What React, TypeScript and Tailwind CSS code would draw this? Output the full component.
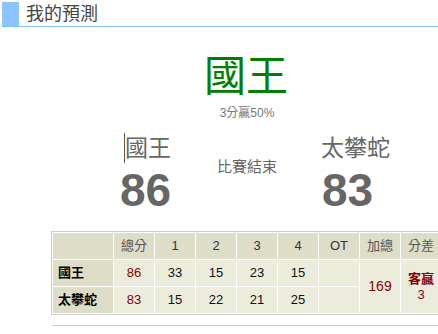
import React from "react";

const cjk = { fontFamily: '"Liberation Sans", "Noto Sans CJK TC", sans-serif' };

export default function App() {
  const head = "bg-[#dedec8] text-[#333] text-center font-normal";
  const cell = "bg-[#ececdc] text-center";
  return (
    <div className="w-[438px] h-[334px] overflow-hidden bg-white" style={cjk}>
      {/* header */}
      <div className="ml-[2px] mt-[2px] flex border-b border-[#80c0ff]">
        <div className="w-[17px] h-[24px] bg-[#8cc4ff]" />
        <div className="pl-[7px] text-[18px] leading-[24px] text-[#444]">我的預測</div>
      </div>

      {/* winner */}
      <div className="mt-[26px] text-center text-[42px] leading-[48px] text-[#008000] pl-[54px]">國王</div>
      <div className="mt-[4px] text-center text-[12px] leading-[16px] text-[#777] pl-[56px]">3分贏50%</div>

      {/* teams */}
      <div className="mt-[12px] flex">
        <div className="ml-[120px] w-[81px] flex flex-col">
          <div className="flex items-center h-[30px]">
            <span className="ml-[4px] w-px h-[30px] bg-[#555]" />
            <span className="text-[23px] leading-[30px] text-[#666]">國王</span>
          </div>
          <div className="mt-[4px] text-[46px] leading-[46px] font-bold text-[#666]" style={{ fontFamily: '"Liberation Sans", sans-serif' }}>86</div>
        </div>
        <div className="w-[92px] text-center pt-[24px] text-[15px] leading-[20px] text-[#666]">比賽結束</div>
        <div className="ml-[28px] flex flex-col">
          <div className="h-[30px] text-[23px] leading-[30px] text-[#666]">太攀蛇</div>
          <div className="mt-[4px] ml-[1px] text-[46px] leading-[46px] font-bold text-[#666]" style={{ fontFamily: '"Liberation Sans", sans-serif' }}>83</div>
        </div>
      </div>

      {/* table */}
      <div className="mt-[18px] ml-[51px] w-[400px]">
        <table className="table-fixed border-separate border-spacing-[1px] border border-[#cccccc] bg-white text-[13px] w-[392px]">
          <colgroup>
            <col className="w-[60px]" />
            <col className="w-[40px]" />
            <col className="w-[40px]" />
            <col className="w-[40px]" />
            <col className="w-[40px]" />
            <col className="w-[40px]" />
            <col className="w-[40px]" />
            <col className="w-[40px]" />
            <col className="w-[40px]" />
          </colgroup>
          <thead>
            <tr className="h-[26px]">
              <th className={head}></th>
              <th className={head + " text-[#555]"}>總分</th>
              <th className={head}>1</th>
              <th className={head}>2</th>
              <th className={head}>3</th>
              <th className={head}>4</th>
              <th className={head}>OT</th>
              <th className={head + " text-[#555]"}>加總</th>
              <th className={head + " text-[#555]"}>分差</th>
            </tr>
          </thead>
          <tbody>
            <tr className="h-[26px]">
              <td className="bg-[#dedec8] text-left pl-[5px] font-bold text-black">國王</td>
              <td className={cell + " text-[#880000]"}>86</td>
              <td className={cell + " text-[#111]"}>33</td>
              <td className={cell + " text-[#111]"}>15</td>
              <td className={cell + " text-[#111]"}>23</td>
              <td className={cell + " text-[#111]"}>15</td>
              <td className={cell}></td>
              <td rowSpan={2} className={cell + " text-[#880000] text-[14px]"}>169</td>
              <td rowSpan={2} className={cell + " text-[#880000] leading-[16px]"}>
                <div className="font-bold">客贏</div>
                <div>3</div>
              </td>
            </tr>
            <tr className="h-[26px]">
              <td className="bg-[#dedec8] text-left pl-[5px] font-bold text-black">太攀蛇</td>
              <td className={cell + " text-[#880000]"}>83</td>
              <td className={cell + " text-[#111]"}>15</td>
              <td className={cell + " text-[#111]"}>22</td>
              <td className={cell + " text-[#111]"}>21</td>
              <td className={cell + " text-[#111]"}>25</td>
              <td className={cell}></td>
            </tr>
          </tbody>
        </table>
      </div>
      <div className="mt-[10px] ml-[52px] h-px bg-[#cccccc] w-[400px]" />
    </div>
  );
}
